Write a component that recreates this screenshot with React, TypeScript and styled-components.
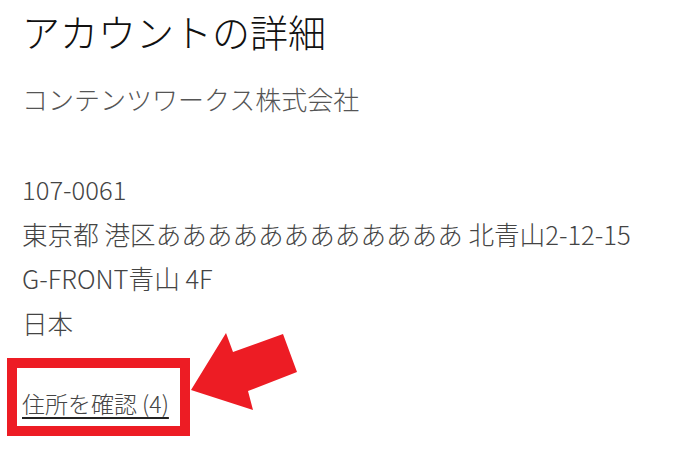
import styled, { createGlobalStyle } from "styled-components";

const GlobalStyle = createGlobalStyle`
  html, body {
    margin: 0;
    background: #fff;
  }
  body {
    font-family: "Noto Sans CJK JP", "Noto Sans", sans-serif;
  }
`;

const Page = styled.div`
  position: relative;
  width: 700px;
  height: 450px;
  padding: 8px 0 0 22px;
  box-sizing: border-box;
  overflow: hidden;
`;

const Title = styled.h1`
  margin: 0;
  font-size: 38px;
  font-weight: 300;
  line-height: 46px;
  color: #111;
`;

const Company = styled.p`
  margin: 23px 0 0;
  font-size: 26px;
  font-weight: 300;
  line-height: 44px;
  color: #555;
`;

const Address = styled.address`
  margin-top: 46px;
  font-style: normal;
  font-size: 25.6px;
  font-weight: 300;
  line-height: 44.5px;
  color: #444;
`;

const Line = styled.div`
  white-space: nowrap;
`;

const LinkArea = styled.div`
  position: relative;
  display: inline-block;
  margin-top: 43px;
`;

const AddressLink = styled.a`
  font-size: 23px;
  font-weight: 300;
  line-height: 30px;
  color: #444;
  text-decoration: underline;
  text-decoration-color: #222;
  text-decoration-thickness: 2px;
  text-underline-offset: 4px;
  cursor: pointer;
`;

// annotation box drawn over the link
const Highlight = styled.span`
  position: absolute;
  left: -15px;
  top: -30px;
  width: 183px;
  height: 78px;
  border: 10px solid #ed1c24;
  box-sizing: border-box;
  pointer-events: none;
`;

const Arrow = styled.svg`
  position: absolute;
  left: 0;
  top: 0;
  pointer-events: none;
`;

export default function App() {
  return (
    <>
      <GlobalStyle />
      <Page>
        <Title>アカウントの詳細</Title>
        <Company>コンテンツワークス株式会社</Company>
        <Address>
          <Line>107-0061</Line>
          <Line>東京都 港区ああああああああああああ 北青山2-12-15</Line>
          <Line>G-FRONT青山 4F</Line>
          <Line>日本</Line>
        </Address>
        <LinkArea>
          <AddressLink>住所を確認 (4)</AddressLink>
          <Highlight />
        </LinkArea>
        <Arrow width="700" height="450" viewBox="0 0 700 450">
          <polygon
            points="191,390 226,333 233,352 283,334 297,372 248,391 253,410"
            fill="#ed1c24"
          />
        </Arrow>
      </Page>
    </>
  );
}
